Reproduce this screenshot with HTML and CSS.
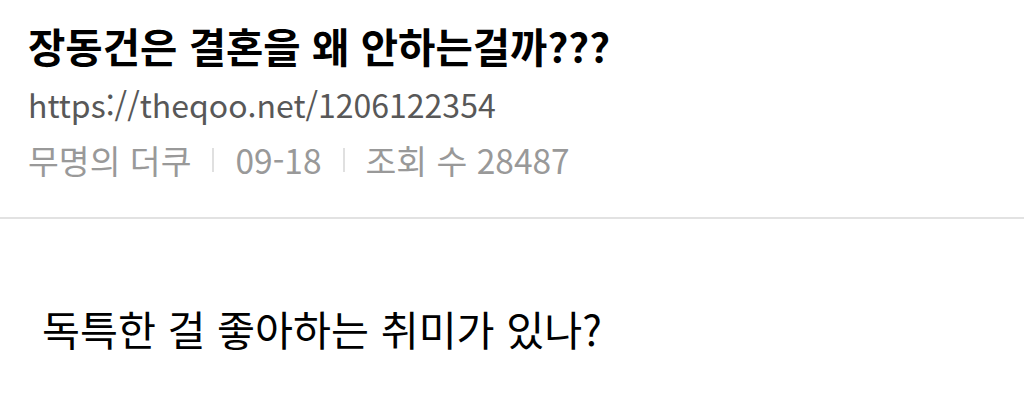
FILE: index.html
```html
<!DOCTYPE html>
<html lang="ko">
  <head>
    <meta charset="UTF-8" />
    <meta name="viewport" content="width=device-width, initial-scale=1.0" />
    <title>장동건은 결혼을 왜 안하는걸까???</title>
    <link rel="stylesheet" href="styles.css">
  </head>
  <body>
    <div class="post-head">
      <h1 class="post-title">장동건은 결혼을 왜 안하는걸까???</h1>
      <div class="post-url">https://theqoo.net/1206122354</div>
      <div class="post-meta">
        <span>무명의 더쿠</span>
        <span class="bar"></span>
        <span>09-18</span>
        <span class="bar"></span>
        <span>조회 수 28487</span>
      </div>
    </div>
    <div class="post-body">
      <p>독특한 걸 좋아하는 취미가 있나?</p>
    </div>
  </body>
</html>
```

FILE: styles.css
```css
* {
  margin: 0;
  padding: 0;
  box-sizing: border-box;
  font-family: "Noto Sans CJK KR", "Noto Sans", sans-serif;
}
body {
  background: #ffffff;
  color: #000000;
  width: 1024px;
  height: 412px;
  overflow: hidden;
}
.post-head {
  padding: 18px 28px 0;
  height: 219px;
  border-bottom: 2px solid #e2e2e2;
}
.post-title {
  font-size: 40.6px;
  font-weight: 700;
  line-height: 56px;
}
.post-url {
  margin-top: 8px;
  font-size: 32px;
  line-height: 44px;
  color: #585858;
}
.post-meta {
  display: flex;
  align-items: center;
  gap: 21px;
  margin-top: 12px;
  font-size: 33.5px;
  line-height: 44px;
  color: #999999;
}
.bar {
  width: 2px;
  height: 24px;
  background: #e0e0e0;
}
.post-body {
  padding: 81px 42px 0;
}
.post-body p {
  font-size: 41.3px;
  line-height: 56px;
}
```
